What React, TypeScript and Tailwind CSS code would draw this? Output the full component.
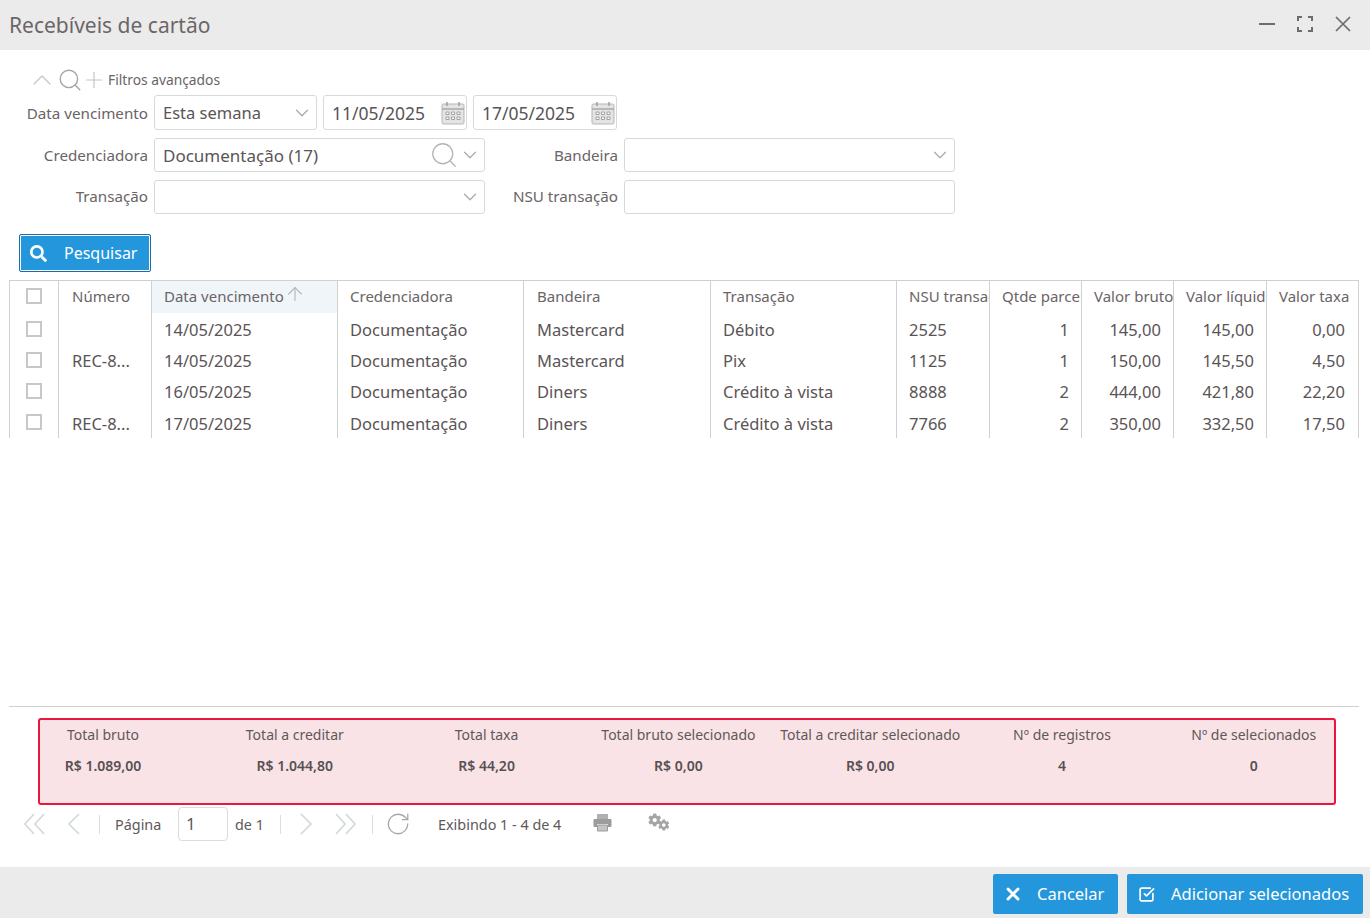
import { ArrowUp, ChevronDown, ChevronUp, Plus, RotateCw, Search, SquareCheckBig, X } from "lucide-react";
import { FaCog, FaSearch } from "react-icons/fa";

const columns = [
  { label: "", width: 49 },
  { label: "Número", width: 93 },
  { label: "Data vencimento", width: 186 },
  { label: "Credenciadora", width: 186 },
  { label: "Bandeira", width: 187 },
  { label: "Transação", width: 186 },
  { label: "NSU transação", width: 93 },
  { label: "Qtde parcelas", width: 92 },
  { label: "Valor bruto", width: 92 },
  { label: "Valor líquido", width: 93 },
  { label: "Valor taxa", width: 92 },
];

const rows = [
  ["", "14/05/2025", "Documentação", "Mastercard", "Débito", "2525", "1", "145,00", "145,00", "0,00"],
  ["REC-8...", "14/05/2025", "Documentação", "Mastercard", "Pix", "1125", "1", "150,00", "145,50", "4,50"],
  ["", "16/05/2025", "Documentação", "Diners", "Crédito à vista", "8888", "2", "444,00", "421,80", "22,20"],
  ["REC-8...", "17/05/2025", "Documentação", "Diners", "Crédito à vista", "7766", "2", "350,00", "332,50", "17,50"],
];

const totals = [
  ["Total bruto", "R$ 1.089,00"],
  ["Total a creditar", "R$ 1.044,80"],
  ["Total taxa", "R$ 44,20"],
  ["Total bruto selecionado", "R$ 0,00"],
  ["Total a creditar selecionado", "R$ 0,00"],
  ["Nº de registros", "4"],
  ["Nº de selecionados", "0"],
];

function CalendarIcon() {
  return (
    <svg width="24" height="24" viewBox="0 0 24 24" fill="none">
      <rect x="1" y="3" width="22" height="20" rx="1.5" fill="#e4e4e4" stroke="#b5b5b5" />
      <path d="M1 8h22" stroke="#a9a9a9" strokeWidth="1.5" />
      <path d="M6 1v4M18 1v4" stroke="#a0a0a0" strokeWidth="1.5" />
      <path d="M5 11h3v2.5H5zM10.5 11h3v2.5h-3zM16 11h3v2.5h-3zM5 16h3v2.5H5zM10.5 16h3v2.5h-3zM16 16h3v2.5h-3z" stroke="#9a9a9a" fill="#fff" strokeWidth="0.9" />
    </svg>
  );
}

function WindowControls() {
  return (
    <div className="flex items-center gap-[22px] -mt-[2px]">
      <svg width="16" height="16" viewBox="0 0 16 16" fill="none" stroke="#6f6a6c" strokeWidth="2">
        <path d="M0 8h16" />
      </svg>
      <svg width="16" height="16" viewBox="0 0 16 16" fill="none" stroke="#6f6a6c" strokeWidth="2">
        <path d="M1 5V1h4M11 1h4v4M15 11v4h-4M5 15H1v-4" />
      </svg>
      <svg width="16" height="16" viewBox="0 0 16 16" fill="none" stroke="#6f6a6c" strokeWidth="1.7">
        <path d="M1 1l14 14M15 1L1 15" />
      </svg>
    </div>
  );
}

function PagerDouble({ flip }: { flip?: boolean }) {
  return (
    <svg width="22" height="22" viewBox="0 0 22 22" fill="none" stroke="#d3d8db" strokeWidth="1.7" className={flip ? "-scale-x-100" : ""}>
      <path d="M11 1L2 11l9 10M21 1l-9 10 9 10" />
    </svg>
  );
}

function PagerSingle({ flip }: { flip?: boolean }) {
  return (
    <svg width="13" height="22" viewBox="0 0 13 22" fill="none" stroke="#d3d8db" strokeWidth="1.7" className={flip ? "-scale-x-100" : ""}>
      <path d="M12 1L2 11l10 10" />
    </svg>
  );
}

function PrintIcon() {
  return (
    <svg width="19" height="19" viewBox="0 0 19 19" className="-mt-[4px]">
      <path d="M4 1h11v5H4z" fill="#b0b0b0" />
      <path d="M1.5 6h16a1 1 0 0 1 1 1v6a1 1 0 0 1-1 1H15v-3H4v3H1.5a1 1 0 0 1-1-1V7a1 1 0 0 1 1-1z" fill="#9c9c9c" />
      <path d="M4.5 12h10v6h-10z" fill="#c4c4c4" stroke="#9c9c9c" />
    </svg>
  );
}

function GearsIcon() {
  return (
    <div className="ml-[36px] w-[22px] flex items-start -mt-[5px] text-[#a5a5a5]">
      <FaCog className="w-[14px] h-[14px]" />
      <FaCog className="w-[12px] h-[12px] -ml-[3px] mt-[6px]" />
    </div>
  );
}

function Box({ className, children }: { className: string; children?: React.ReactNode }) {
  return (
    <div className={`h-full flex items-center bg-white border border-[#d9d9d9] rounded-[3px] pl-2 text-[16.5px] text-[#5a5456] ${className}`}>
      {children}
    </div>
  );
}

function Arrow() {
  return <ChevronDown className="w-[22px] h-[22px] text-[#a8a8a8] shrink-0" strokeWidth={1.3} />;
}

function Label({ className, children }: { className: string; children: React.ReactNode }) {
  return <div className={`text-right text-[15.2px] text-[#6a6466] whitespace-nowrap ${className}`}>{children}</div>;
}

function Separator() {
  return <div className="w-px h-[19px] bg-[#dddddd]" />;
}

export default function App() {
  return (
    <div className="w-[1370px] h-[918px] bg-white flex flex-col overflow-hidden font-['Open_Sans',sans-serif] text-[#5a5456]">
      <header className="h-[50px] bg-[#ebebeb] flex items-center justify-between pl-[9px] pr-[19px] shrink-0">
        <h1 className="text-[21px] text-[#6b6668] mt-[2px]">Recebíveis de cartão</h1>
        <WindowControls />
      </header>

      <main className="flex-1 min-h-0 flex flex-col pt-[19px]">
        <div className="h-[22px] flex items-center pl-[26px]">
          <ChevronUp className="w-[32px] h-[32px] text-[#c8c8c8] shrink-0" strokeWidth={1} />
          <Search className="w-[26px] h-[26px] -ml-[1px] text-[#a5a5a5] shrink-0" strokeWidth={1.3} />
          <Plus className="w-[26px] h-[26px] -ml-[2.5px] text-[#c4c4c4] shrink-0" strokeWidth={1.1} />
          <span className="ml-[1.5px] text-[13.8px] text-[#6a6466]">Filtros avançados</span>
        </div>

        <div className="mt-[4px] flex flex-col gap-[8px]">
          <div className="h-[35px] flex items-center">
            <Label className="w-[148px] mt-[2px]">Data vencimento</Label>
            <Box className="ml-[6px] w-[163px] justify-between pr-[3px]"><span className="mt-[2px]">Esta semana</span><Arrow /></Box>
            <Box className="ml-[6px] w-[144px] justify-between pr-px"><span className="text-[17.5px] mt-[2px]">11/05/2025</span><CalendarIcon /></Box>
            <Box className="ml-[6px] w-[144px] justify-between pr-px"><span className="text-[17.5px] mt-[2px]">17/05/2025</span><CalendarIcon /></Box>
          </div>
          <div className="h-[34px] flex items-center">
            <Label className="w-[148px]">Credenciadora</Label>
            <Box className="ml-[6px] w-[331px] justify-between pr-[3px]">
              <span className="text-[17px] mt-[2px]">Documentação (17)</span>
              <span className="flex items-center">
                <Search className="w-[30px] h-[30px] text-[#b5b5b5]" strokeWidth={1.05} />
                <Arrow />
              </span>
            </Box>
            <Label className="w-[133px]">Bandeira</Label>
            <Box className="ml-[6px] w-[331px] justify-end pr-[3px]"><Arrow /></Box>
          </div>
          <div className="h-[34px] flex items-center">
            <Label className="w-[148px] -mt-[2px]">Transação</Label>
            <Box className="ml-[6px] w-[331px] justify-end pr-[3px]"><Arrow /></Box>
            <Label className="w-[133px] -mt-[2px]">NSU transação</Label>
            <Box className="ml-[6px] w-[331px]" />
          </div>
        </div>

        <button className="mt-[20px] ml-[19px] w-[132px] h-[38px] flex items-center bg-[#2496dc] border border-[#1a6fa6] outline outline-1 -outline-offset-2 outline-white rounded-[2px] text-white text-[16px] pl-[10px]">
          <FaSearch className="w-[17px] h-[17px]" />
          <span className="ml-[17px]">Pesquisar</span>
        </button>

        <div className="mt-[8px] ml-[9px] w-[1350px] h-[426px] shrink-0">
          <table className="table-fixed w-[1350px] border-collapse border-t border-[#d0d0d0] text-[16.5px]">
            <colgroup>
              {columns.map((c, i) => (
                <col key={i} style={{ width: c.width }} />
              ))}
            </colgroup>
            <thead>
              <tr className="h-[32px]">
                {columns.map((c, i) => (
                  <th
                    key={i}
                    className={`border-x border-[#d0d0d0] font-normal text-left text-[15px] text-[#6a6466] whitespace-nowrap overflow-hidden p-0 pb-[2px] ${i === 0 ? "pl-[16px]" : i === 1 || i === 4 ? "pl-[13px]" : "pl-[12px]"} ${i === 2 ? "bg-[#eff5f9]" : ""}`}
                  >
                    {i === 0 ? (
                      <span className="block w-[16px] h-[16px] border-2 border-[#c8c8c8] bg-white" />
                    ) : i === 2 ? (
                      <span className="flex items-center">
                        {c.label}
                        <ArrowUp className="w-[22px] h-[22px] text-[#b5b5b5] -mt-[4px]" strokeWidth={1.2} />
                      </span>
                    ) : (
                      c.label
                    )}
                  </th>
                ))}
              </tr>
            </thead>
            <tbody>
              {rows.map((row, r) => (
                <tr key={r} className={r === 3 ? "h-[32px]" : "h-[31px]"}>
                  <td className="border-x border-[#d0d0d0] pl-[16px] p-0 pt-[4px]">
                    <span className="block w-[16px] h-[16px] border-2 border-[#c8c8c8] bg-white -mt-[3px]" />
                  </td>
                  {row.map((value, i) => (
                    <td
                      key={i}
                      className={`border-x border-[#d0d0d0] p-0 whitespace-nowrap overflow-hidden ${r === 3 ? "pt-[5px]" : "pt-[4px]"} ${i >= 6 ? (i === 9 ? "text-right pr-[13px]" : "text-right pr-[12px]") : i === 0 || i === 3 ? "pl-[13px]" : "pl-[12px]"}`}
                    >
                      {value}
                    </td>
                  ))}
                </tr>
              ))}
            </tbody>
          </table>
        </div>

        <div className="ml-[9px] w-[1350px] h-px bg-[#d0d0d0]" />

        <section className="mt-[11px] ml-[38px] w-[1298px] h-[87px] shrink-0 bg-[#fae3e6] border-2 border-[#e8173f] rounded-[3px] flex gap-[61.8px] pt-[5px] -mb-px">
          {totals.map(([label, value]) => (
            <div key={label} className="w-[130px] shrink-0 flex flex-col items-center first:ml-[-2px]">
              <span className="text-[14px] leading-[20px] text-[#5e585a] whitespace-nowrap">{label}</span>
              <span className="mt-[11px] text-[14px] leading-[20px] font-semibold text-[#565052] whitespace-nowrap">{value}</span>
            </div>
          ))}
        </section>

        <div className="mt-[3px] h-[34px] flex items-center pl-[23px] text-[14.4px] text-[#5e585a]">
          <PagerDouble />
          <div className="ml-[22px]"><PagerSingle /></div>
          <div className="ml-[19px]"><Separator /></div>
          <span className="ml-[15px] w-[45px] whitespace-nowrap mt-[2px]">Página</span>
          <div className="ml-[18px] w-[50px] h-[34px] border border-[#dcdcdc] rounded-[4px] flex items-center pl-[7px] text-[17px]">1</div>
          <span className="ml-[7px] w-[29px] whitespace-nowrap mt-[2px]">de 1</span>
          <div className="ml-[16px]"><Separator /></div>
          <div className="ml-[19px]"><PagerSingle flip /></div>
          <div className="ml-[22px]"><PagerDouble flip /></div>
          <div className="ml-[15px]"><Separator /></div>
          <RotateCw className="w-[26px] h-[26px] ml-[12px] text-[#a9a9a9] shrink-0" strokeWidth={1.2} />
          <span className="ml-[27px] w-[155px] whitespace-nowrap mt-[2px]">Exibindo 1 - 4 de 4</span>
          <PrintIcon />
          <GearsIcon />
        </div>
      </main>

      <footer className="h-[51px] bg-[#ebebeb] flex items-start justify-end gap-[9px] pt-[7px] pr-[7px] shrink-0">
        <button className="w-[125px] h-[40px] bg-[#2496dc] rounded-[2px] text-white text-[16.5px] flex items-center pl-[10px]">
          <X className="w-[20px] h-[20px]" strokeWidth={3.5} />
          <span className="ml-[14px]">Cancelar</span>
        </button>
        <button className="w-[236px] h-[40px] bg-[#2496dc] rounded-[2px] text-white text-[16.5px] flex items-center pl-[11px]">
          <SquareCheckBig className="w-[17px] h-[17px]" strokeWidth={2.4} />
          <span className="ml-[16px] whitespace-nowrap">Adicionar selecionados</span>
        </button>
      </footer>
    </div>
  );
}
